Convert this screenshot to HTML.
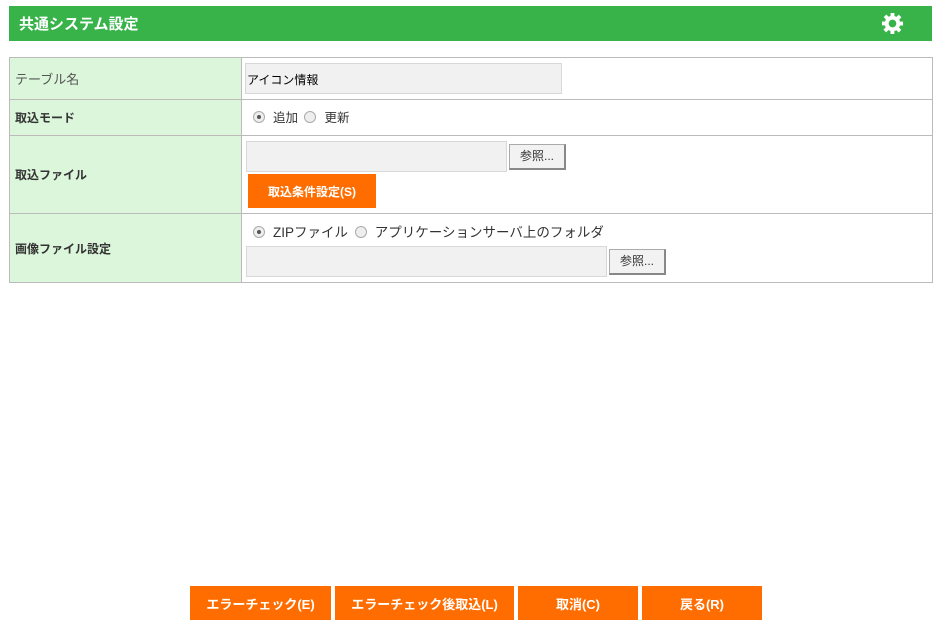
<!DOCTYPE html>
<html><head><meta charset="utf-8"><style>
body{margin:0;width:937px;height:625px;background:#fff;font-family:"Liberation Sans","Noto Sans CJK JP",sans-serif;font-size:13px;color:#333;position:relative;overflow:hidden}
.a{position:absolute;box-sizing:border-box}
.hdr{left:9px;top:6px;width:923px;height:35px;background:#38b34a;color:#fff;font-weight:bold;font-size:15px;padding:7px 0 0 10px}
.lab{background:#dcf6dc;left:9px;width:233px;border:1px solid #bbb;padding-left:5px;display:flex;align-items:center;font-weight:bold;font-size:12px}
.val{left:241px;width:692px;border:1px solid #bbb}
.inp{background:#f1f1f1;border:1px solid #d8d8d8}
.btn{background:#f2f2f2;border:1px solid #aaa;border-bottom:2px solid #888;border-right:2px solid #888;font-size:12px;text-align:center;line-height:22px}
.ob{background:#ff6d00;color:#fff;font-weight:bold;font-size:13px;text-align:center;display:flex;align-items:center;justify-content:center}
.rad{display:inline-block;width:10px;height:10px;border:1px solid #aaa;border-radius:50%;background:#eee;vertical-align:-1px;position:relative;margin-right:8px}
.rad.on::after{content:"";position:absolute;left:3px;top:3px;width:4px;height:4px;border-radius:50%;background:#555}
</style></head><body>
<div class="a hdr">共通システム設定</div>
<svg class="a" style="left:881px;top:12px" width="23" height="23" viewBox="0 0 24 24"><path fill="#fff" d="M10 1h4v3.2l2.2.9 2.3-2.3 2.8 2.8-2.3 2.3.9 2.2H23v4h-3.2l-.9 2.2 2.3 2.3-2.8 2.8-2.3-2.3-2.2.9V23h-4v-3.2l-2.2-.9-2.3 2.3-2.8-2.8 2.3-2.3-.9-2.2H1v-4h3.2l.9-2.2-2.3-2.3 2.8-2.8 2.3 2.3L10 4.2zM12 8a4 4 0 100 8 4 4 0 000-8z"/></svg>

<div class="a lab" style="top:57px;height:43px;font-weight:normal;font-size:13px;color:#555">テーブル名</div>
<div class="a val" style="top:57px;height:43px"></div>
<div class="a inp" style="left:245px;top:63px;width:317px;height:31px;padding:7px 0 0 1px;font-size:12px;color:#000">アイコン情報</div>

<div class="a lab" style="top:99px;height:37px">取込モード</div>
<div class="a val" style="top:99px;height:37px"></div>
<div class="a" style="left:253px;top:107px;font-size:12.5px"><span class="rad on"></span>追加 <span class="rad" style="margin-left:3px"></span>更新</div>

<div class="a lab" style="top:135px;height:79px">取込ファイル</div>
<div class="a val" style="top:135px;height:79px"></div>
<div class="a inp" style="left:246px;top:141px;width:261px;height:31px"></div>
<div class="a btn" style="left:509px;top:144px;width:57px;height:26px">参照...</div>
<div class="a ob" style="left:248px;top:174px;width:128px;height:34px;font-size:12px">取込条件設定(S)</div>

<div class="a lab" style="top:213px;height:70px">画像ファイル設定</div>
<div class="a val" style="top:213px;height:70px"></div>
<div class="a" style="left:253px;top:221px;font-size:13.5px"><span class="rad on"></span>ZIPファイル <span class="rad" style="margin-left:3px"></span>アプリケーションサーバ上のフォルダ</div>
<div class="a inp" style="left:246px;top:246px;width:361px;height:31px"></div>
<div class="a btn" style="left:609px;top:249px;width:57px;height:26px">参照...</div>

<div class="a ob" style="left:190px;top:586px;width:141px;height:34px">エラーチェック(E)</div>
<div class="a ob" style="left:335px;top:586px;width:179px;height:34px">エラーチェック後取込(L)</div>
<div class="a ob" style="left:518px;top:586px;width:120px;height:34px">取消(C)</div>
<div class="a ob" style="left:642px;top:586px;width:120px;height:34px">戻る(R)</div>
</body></html>
